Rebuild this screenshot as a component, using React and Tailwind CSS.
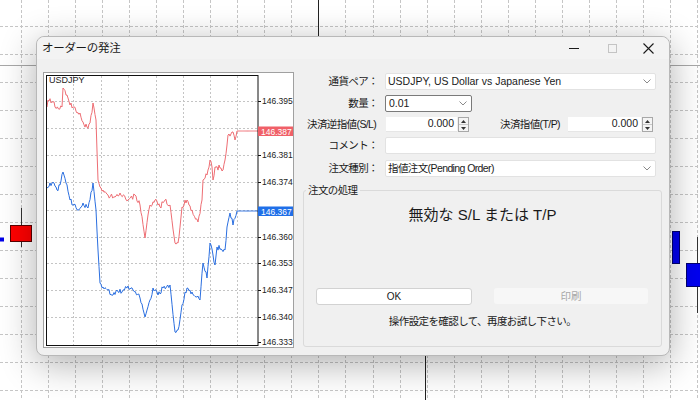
import React from 'react';

const RED = [
  [47,107],[48,100],[53,102],[55,107],[62,107],[63,88],[67,95],[70,105],[73,107],[77,113],[80,113],[83,122],[87,127],[90,123],[93,103],[96,120],[98,180],[100,187],[103,190],[108,195],[115,197],[120,193],[128,200],[135,195],[140,205],[145,238],[148,215],[150,205],[155,200],[160,207],[165,200],[170,205],[175,243],[178,243],[182,207],[187,200],[192,210],[198,222],[202,200],[203,180],[207,175],[210,160],[212,167],[213,180],[215,167],[220,168],[223,170],[225,160],[228,135],[232,132],[235,140],[237,131],[258,131],
];

const BLUE = [
  [47,188],[52,183],[57,190],[60,185],[63,172],[66,183],[70,200],[73,205],[78,210],[83,203],[88,208],[93,183],[96,210],[98,250],[100,283],[103,287],[108,290],[113,295],[117,290],[122,292],[128,286],[133,290],[140,298],[145,317],[150,300],[153,288],[158,295],[163,288],[170,285],[175,332],[178,330],[182,305],[187,288],[192,292],[197,297],[200,300],[203,263],[207,278],[210,243],[213,255],[215,265],[217,247],[222,250],[225,250],[227,227],[230,213],[233,225],[237,211],[258,211],
];

// adds tick-like noise between the key points
const jag = (pts, amp, seed) => {
  const out = [];
  for (let i = 0; i < pts.length - 1; i++) {
    const [x0, y0] = pts[i];
    const [x1, y1] = pts[i + 1];
    const steps = Math.max(1, Math.round((x1 - x0) / 1.1));
    for (let s = 0; s < steps; s++) {
      const t = s / steps;
      const x = x0 + (x1 - x0) * t;
      let y = y0 + (y1 - y0) * t;
      if (s > 0 && x0 < 237) {
        const r = Math.sin(x * 12.9898 + seed) * 43758.5453;
        y += ((r - Math.floor(r)) * 2 - 1) * amp;
      }
      out.push(`${x.toFixed(1)},${y.toFixed(1)}`);
    }
  }
  const last = pts[pts.length - 1];
  out.push(`${last[0]},${last[1]}`);
  return out.join(' ');
};

const PRICES = [
  ['146.395', 101], ['146.381', 155], ['146.374', 182],
  ['146.360', 237], ['146.353', 263], ['146.347', 290], ['146.340', 317], ['146.333', 342],
];

const Chevron = () => (
  <svg width="8" height="5" viewBox="0 0 8 5" className="shrink-0">
    <polyline points="0.5,0.5 4,4 7.5,0.5" fill="none" stroke="#8a8a8a" strokeWidth="1" />
  </svg>
);

const Spinner = () => (
  <div className="w-[11px] h-[15px] flex flex-col border border-[#a8a8a8] bg-[#f4f4f4] ml-[1px]">
    <div className="flex-1 flex items-center justify-center border-b border-[#c8c8c8]">
      <svg width="5" height="3" viewBox="0 0 5 3"><polygon points="0,3 2.5,0 5,3" fill="#333" /></svg>
    </div>
    <div className="flex-1 flex items-center justify-center">
      <svg width="5" height="3" viewBox="0 0 5 3"><polygon points="0,0 2.5,3 5,0" fill="#333" /></svg>
    </div>
  </div>
);

const MiniChart = () => (
  <div className="w-[251px] h-[276px] border border-[#a0a0a0] bg-white shrink-0">
    <svg width="249" height="274" viewBox="44 73 249 274">
      {[73, 101, 128, 156, 183, 210, 237].map(x => (
        <line key={x} x1={x + 0.5} y1="76" x2={x + 0.5} y2="345" stroke="#c4c4c4" strokeDasharray="2 2" />
      ))}
      {[101, 128, 155, 182, 210, 237, 263, 290, 317].map(y => (
        <line key={y} x1="47" y1={y + 0.5} x2="258" y2={y + 0.5} stroke="#c4c4c4" strokeDasharray="2 2" />
      ))}
      <polyline points={jag(RED, 2.8, 1)} fill="none" stroke="#ee6e74" strokeWidth="1" />
      <polyline points={jag(BLUE, 2.8, 1)} fill="none" stroke="#2b6fe0" strokeWidth="1" />
      <rect x="46.5" y="75.5" width="211.5" height="270" fill="none" stroke="#111" />
      <text x="49" y="83" fontSize="9" fontFamily="Liberation Sans" fill="#222">USDJPY</text>
      {PRICES.map(([p, y]) => (
        <g key={p}>
          <line x1="258" y1={y + 0.5} x2="261" y2={y + 0.5} stroke="#111" />
          <text x="262" y={y + 3} fontSize="8.5" fontFamily="Liberation Sans" fill="#222">{p}</text>
        </g>
      ))}
      <line x1="258" y1="128.5" x2="261" y2="128.5" stroke="#111" />
      <rect x="258" y="126.5" width="35" height="9.5" fill="#f06068" />
      <text x="261" y="134.5" fontSize="8.5" fontFamily="Liberation Sans" fill="#fff">146.387</text>
      <rect x="258" y="206.5" width="35" height="9.5" fill="#1f6fe8" />
      <text x="261" y="214.5" fontSize="8.5" fontFamily="Liberation Sans" fill="#fff">146.367</text>
    </svg>
  </div>
);

const Background = () => {
  const hs = Array.from({ length: 14 }, (_, i) => 26 + i * 28);
  const vs = Array.from({ length: 26 }, (_, i) => Math.round(21 + i * 27.04));
  return (
    <svg className="absolute inset-0" width="700" height="400" viewBox="0 0 700 400">
      {hs.map(y => <line key={'h' + y} x1="0" y1={y + 0.5} x2="700" y2={y + 0.5} stroke="#c6c6c6" strokeDasharray="3 2" />)}
      {vs.map(x => <line key={'v' + x} x1={x + 0.5} y1="0" x2={x + 0.5} y2="400" stroke="#c6c6c6" strokeDasharray="3 2" />)}
      <line x1="0" y1="65.5" x2="700" y2="65.5" stroke="#a8a8a8" />
      <line x1="318.5" y1="0" x2="318.5" y2="40" stroke="#222" />
      <line x1="425.5" y1="350" x2="425.5" y2="400" stroke="#222" />
      <line x1="416" y1="355.5" x2="436" y2="355.5" stroke="#222" />
      <line x1="443" y1="355.5" x2="463" y2="355.5" stroke="#222" />
      {/* candles */}
      <line x1="21.5" y1="208" x2="21.5" y2="247" stroke="#333" />
      <rect x="10.5" y="225.5" width="21" height="16" fill="#f00" stroke="#5a0000" />
      <rect x="-1" y="237.5" width="5" height="4" fill="#0000e8" />
      <rect x="672.5" y="231.5" width="7" height="32" fill="#0000f0" stroke="#000070" />
      <line x1="697.5" y1="237" x2="697.5" y2="313" stroke="#333" />
      <rect x="686.5" y="263.5" width="16" height="23" fill="#0000f0" stroke="#000070" />
    </svg>
  );
};

export default function App() {
  return (
    <div className="relative w-[700px] h-[400px] overflow-hidden bg-white font-['Liberation_Sans','Noto_Sans_CJK_JP',sans-serif] text-[#1a1a1a]">
      <Background />

      <div className="absolute left-[36px] top-[36px] w-[634px] h-[320px] rounded-[8px] border border-[#b8b8b8] bg-[#f0f0f0] shadow-[0_8px_36px_rgba(0,0,0,0.32)] flex flex-col">
        {/* title bar */}
        <div className="h-[22px] flex items-center pl-[5px] pt-[1px] rounded-t-[8px] bg-[#f3f3f3]">
          <span className="text-[11.5px] tracking-[-0.3px]">オーダーの発注</span>
          <div className="ml-auto flex items-center h-full">
            <div className="w-[38px] flex justify-center">
              <div className="w-[10px] h-px bg-[#1a1a1a]" />
            </div>
            <div className="w-[38px] flex justify-center">
              <div className="w-[9px] h-[9px] border border-[#c4c4c4]" />
            </div>
            <div className="w-[38px] flex justify-center pr-[4px]">
              <svg width="11" height="11" viewBox="0 0 11 11">
                <path d="M0.5 0.5 L10.5 10.5 M10.5 0.5 L0.5 10.5" stroke="#1a1a1a" strokeWidth="1.1" />
              </svg>
            </div>
          </div>
        </div>

        {/* body */}
        <div className="flex pl-[6px] pt-[13px] gap-[9px]">
          <MiniChart />

          <div className="w-[359px] flex flex-col text-[10.5px] tracking-[-0.6px]">
            <div className="flex items-center h-[17px] mt-[1px]">
              <div className="w-[75px] text-right">通貨ペア：</div>
              <div className="ml-[7px] w-[271px] h-full bg-white border border-[#e2e2e2] rounded-[2px] flex items-center pl-[2px] pr-[4px] tracking-normal">
                <span className="flex-1 text-[10.5px]">USDJPY, US Dollar vs Japanese Yen</span>
                <Chevron />
              </div>
            </div>

            <div className="flex items-center h-[17px] mt-[5px]">
              <div className="w-[75px] text-right">数量：</div>
              <div className="ml-[7px] w-[87px] h-full bg-white border border-[#7a7a7a] rounded-[2px] flex items-center pl-[3px] pr-[4px] tracking-normal">
                <span className="flex-1 text-[10.5px]">0.01</span>
                <Chevron />
              </div>
            </div>

            <div className="flex items-center h-[17px] mt-[4px]">
              <div className="w-[76px] pl-[4px] whitespace-nowrap">決済逆指値(S/L)</div>
              <div className="ml-[7px] w-[71px] h-[15px] bg-white border-b border-[#e6e6e6] flex items-center justify-end pr-[3px] tracking-normal">0.000</div>
              <Spinner />
              <div className="ml-[31px] w-[68px] whitespace-nowrap">決済指値(T/P)</div>
              <div className="w-[73px] h-[15px] bg-white border-b border-[#e6e6e6] flex items-center justify-end pr-[3px] tracking-normal">0.000</div>
              <Spinner />
            </div>

            <div className="flex items-center h-[17px] mt-[4px]">
              <div className="w-[75px] text-right">コメント：</div>
              <div className="ml-[7px] w-[271px] h-full bg-white border border-[#e2e2e2] rounded-[2px]" />
            </div>

            <div className="flex items-center h-[17px] mt-[6px]">
              <div className="w-[75px] text-right">注文種別：</div>
              <div className="ml-[7px] w-[271px] h-full bg-white border border-[#e2e2e2] rounded-[2px] flex items-center pl-[2px] pr-[4px]">
                <span className="flex-1 text-[10.5px]">指値注文(Pending Order)</span>
                <Chevron />
              </div>
            </div>

            <fieldset className="mt-[6px] h-[164px] border border-[#dadada] rounded-[3px]">
              <legend className="ml-[2px] px-[2px] text-[10.5px] leading-[14px]">注文の処理</legend>
              <div className="mt-[8px] text-center text-[15px] leading-[20px] tracking-normal">無効な S/L または T/P</div>
              <div className="mt-[63px] flex gap-[22px] px-[12px] tracking-normal">
                <button className="w-[156px] h-[17px] bg-white border border-[#d2d2d2] rounded-[3px] text-[10px] leading-none">OK</button>
                <button className="w-[154px] h-[16px] bg-[#f7f7f7] rounded-[3px] text-[10.5px] text-[#a8a8a8] leading-none">印刷</button>
              </div>
              <div className="mt-[9px] text-center text-[10.5px] leading-[14px]">操作設定を確認して、再度お試し下さい。</div>
            </fieldset>
          </div>
        </div>
      </div>
    </div>
  );
}
